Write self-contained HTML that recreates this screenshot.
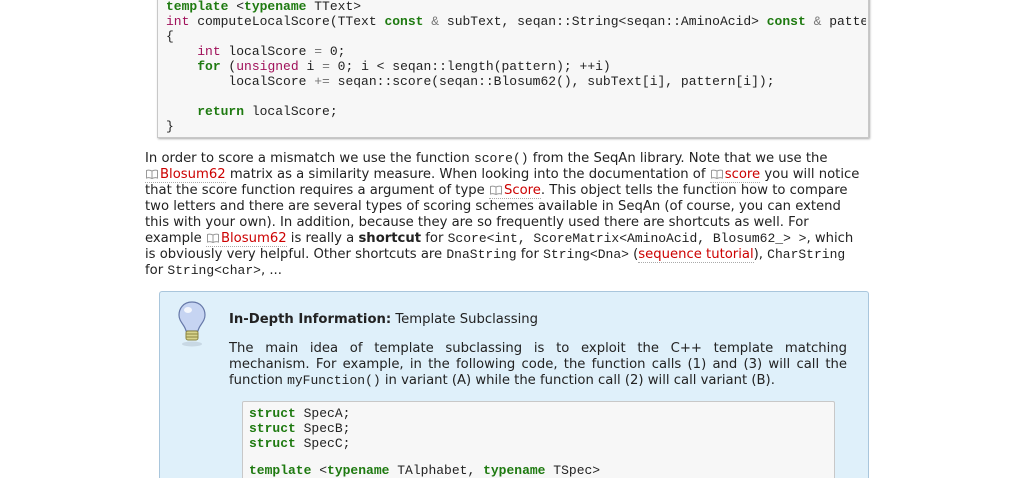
<!DOCTYPE html>
<html style="overflow:hidden;height:478px"><head><meta charset="utf-8"><style>
body{margin:0;width:1009px;height:478px;background:#fff;overflow:hidden;position:relative;font-family:"DejaVu Sans",Verdana,sans-serif;}
.code{position:absolute;background:#f7f7f7;border:1px solid #c8c8c8;box-shadow:1px 1px 2px #aaa;}
.cl{position:absolute;font-family:"Liberation Mono",monospace;font-size:13px;white-space:pre;color:#222;line-height:15px;}
.k{color:#1e7a10;font-weight:bold}
.t{color:#a0105a}
.o{color:#777}
.p{position:absolute;left:145px;font-size:13.2px;white-space:nowrap;color:#222;line-height:16px;}
.m{font-family:"Liberation Mono",monospace;font-size:13px}
a{color:#c00;text-decoration:none;border-bottom:1px dotted #aaa}
.bk{display:inline-block;width:14px;height:10px;margin-right:1px;vertical-align:-1px}
.info{position:absolute;left:159px;top:291px;width:708px;height:187px;background:#dff0fa;border:1px solid #a9c6dc;border-bottom:none;border-radius:3px 3px 0 0;}
.ip{position:absolute;left:229px;width:618px;font-size:13.2px;color:#222;line-height:16px;text-align:justify;text-align-last:justify;white-space:nowrap}
</style></head><body>
<svg width="0" height="0" style="position:absolute"><defs><symbol id="b" viewBox="0 0 14 10"><path d="M7 2 C5 1 3 1 1.5 1.5 V9 C3 8.5 5 8.5 7 9.5 C9 8.5 11 8.5 12.5 9 V1.5 C11 1 9 1 7 2 Z M7 2 V9.5" fill="none" stroke="#999" stroke-width="1"/></symbol></defs></svg>
<div class="code" style="left:157px;top:-5px;width:710px;height:141px"></div>
<div class="cl" style="left:166px;top:-1px"><span class="k">template</span> &lt;<span class="k">typename</span> TText&gt;</div>
<div class="cl" style="left:166px;top:14px;width:700px;overflow:hidden"><span class="t">int</span> computeLocalScore(TText <span class="k">const</span> <span class="o">&amp;</span> subText, seqan::String&lt;seqan::AminoAcid&gt; <span class="k">const</span> <span class="o">&amp;</span> pattern)</div>
<div class="cl" style="left:166px;top:29px">{</div>
<div class="cl" style="left:166px;top:44px">    <span class="t">int</span> localScore <span class="o">=</span> 0;</div>
<div class="cl" style="left:166px;top:59px">    <span class="k">for</span> (<span class="t">unsigned</span> i <span class="o">=</span> 0; i &lt; seqan::length(pattern); ++i)</div>
<div class="cl" style="left:166px;top:74px">        localScore <span class="o">+=</span> seqan::score(seqan::Blosum62(), subText[i], pattern[i]);</div>
<div class="cl" style="left:166px;top:104px">    <span class="k">return</span> localScore;</div>
<div class="cl" style="left:166px;top:119px">}</div>

<div class="p" style="top:151px">In order to score a mismatch we use the function <span class="m">score()</span> from the SeqAn library. Note that we use the</div>
<div class="p" style="top:167px"><a><svg class="bk"><use href="#b"/></svg>Blosum62</a> matrix as a similarity measure. When looking into the documentation of <a><svg class="bk"><use href="#b"/></svg>score</a> you will notice</div>
<div class="p" style="top:183px">that the score function requires a argument of type <a><svg class="bk"><use href="#b"/></svg>Score</a>. This object tells the function how to compare</div>
<div class="p" style="top:199px">two letters and there are several types of scoring schemes available in SeqAn (of course, you can extend</div>
<div class="p" style="top:215px">this with your own). In addition, because they are so frequently used there are shortcuts as well. For</div>
<div class="p" style="top:231px">example <a><svg class="bk"><use href="#b"/></svg>Blosum62</a> is really a <b>shortcut</b> for <span class="m">Score&lt;int, ScoreMatrix&lt;AminoAcid, Blosum62_&gt; &gt;</span>, which</div>
<div class="p" style="top:247px">is obviously very helpful. Other shortcuts are <span class="m">DnaString</span> for <span class="m">String&lt;Dna&gt;</span> (<a>sequence tutorial</a>), <span class="m">CharString</span></div>
<div class="p" style="top:263px">for <span class="m">String&lt;char&gt;</span>, ...</div>

<div class="info"></div>
<svg style="position:absolute;left:176px;top:300px" width="32" height="48" viewBox="0 0 32 48">
<ellipse cx="16" cy="44" rx="10" ry="2.5" fill="#c8d8e4"/>
<path d="M16 2 C7 2 3 9 3 15 C3 22 9 25 10 31 L22 31 C23 25 29 22 29 15 C29 9 25 2 16 2Z" fill="#c6d4f2" stroke="#6678a8" stroke-width="1.2"/>
<ellipse cx="12" cy="10" rx="4" ry="3" fill="#fff" opacity=".8"/>
<rect x="10" y="31" width="12" height="9" rx="2" fill="#d8d48c" stroke="#8a8440"/>
<path d="M10 34 H22 M10 37 H22" stroke="#8a8440"/>
</svg>
<div class="ip" style="top:312px;text-align:left;text-align-last:left"><b>In-Depth Information:</b> Template Subclassing</div>
<div class="ip" style="top:341px">The main idea of template subclassing is to exploit the C++ template matching</div>
<div class="ip" style="top:357px">mechanism. For example, in the following code, the function calls (1) and (3) will call the</div>
<div class="ip" style="top:373px;text-align-last:left">function <span class="m">myFunction()</span> in variant (A) while the function call (2) will call variant (B).</div>
<div class="code" style="left:242px;top:401px;width:591px;height:77px;border-bottom:none;border-radius:2px 2px 0 0;box-shadow:none"></div>
<div class="cl" style="left:249px;top:406px"><span class="k">struct</span> SpecA;</div>
<div class="cl" style="left:249px;top:421px"><span class="k">struct</span> SpecB;</div>
<div class="cl" style="left:249px;top:436px"><span class="k">struct</span> SpecC;</div>
<div class="cl" style="left:249px;top:463px;height:15px;overflow:hidden"><span class="k">template</span> &lt;<span class="k">typename</span> TAlphabet, <span class="k">typename</span> TSpec&gt;</div>
</body></html>
